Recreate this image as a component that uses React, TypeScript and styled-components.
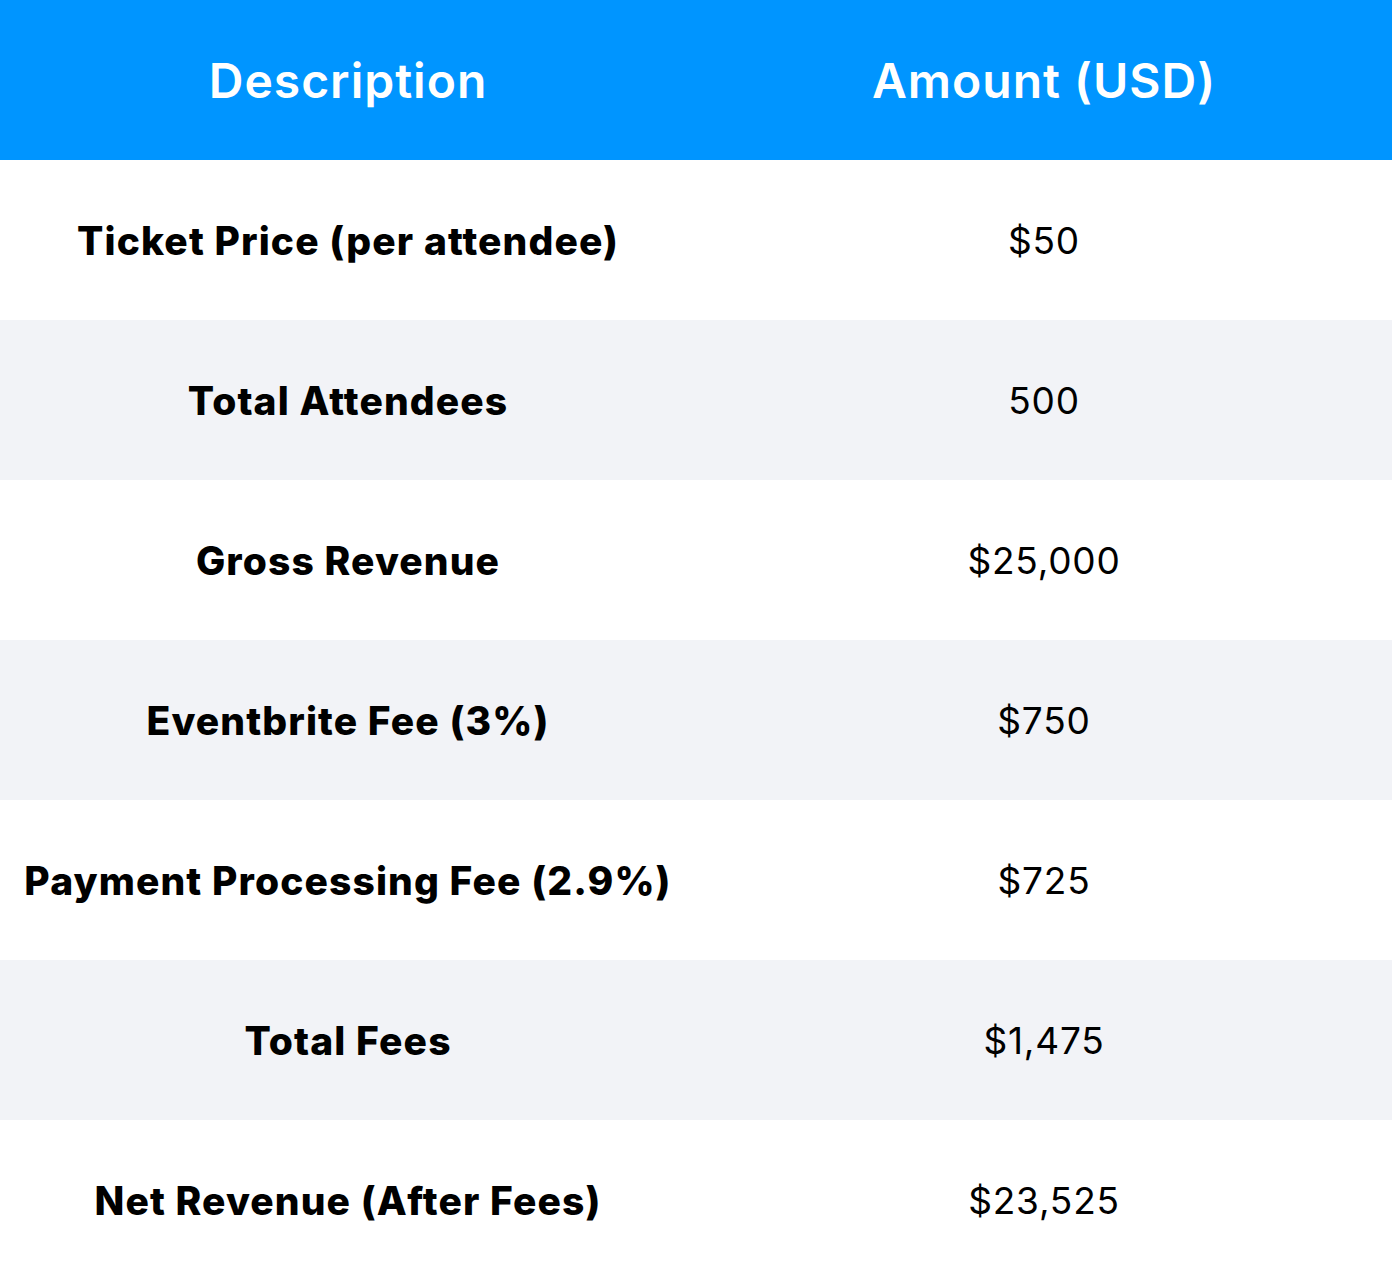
import React from "react";
import styled, { createGlobalStyle } from "styled-components";

const GlobalStyle = createGlobalStyle`
  html, body {
    margin: 0;
    padding: 0;
    background: #ffffff;
  }
`;

const rows = [
  { label: "Ticket Price (per attendee)", amount: "$50" },
  { label: "Total Attendees", amount: "500" },
  { label: "Gross Revenue", amount: "$25,000" },
  { label: "Eventbrite Fee (3%)", amount: "$750" },
  { label: "Payment Processing Fee (2.9%)", amount: "$725" },
  { label: "Total Fees", amount: "$1,475" },
  { label: "Net Revenue (After Fees)", amount: "$23,525" },
];

export default function App() {
  return (
    <>
      <GlobalStyle />
      <Table>
        <HeaderRow>
          <HeaderCell>Description</HeaderCell>
          <HeaderCell>Amount (USD)</HeaderCell>
        </HeaderRow>
        {rows.map((row, i) => (
          <Row key={row.label} $striped={i % 2 === 1}>
            <LabelCell>{row.label}</LabelCell>
            <AmountCell>{row.amount}</AmountCell>
          </Row>
        ))}
      </Table>
    </>
  );
}

const Table = styled.div`
  width: 1392px;
  display: flex;
  flex-direction: column;
  font-family: Inter, "Noto Sans", sans-serif;
  color: #000000;
`;

const HeaderRow = styled.div`
  display: grid;
  grid-template-columns: 1fr 1fr;
  height: 160px;
  background: #0095ff;
`;

const HeaderCell = styled.div`
  display: flex;
  align-items: center;
  justify-content: center;
  color: #ffffff;
  font-size: 48px;
  font-weight: 600;
  letter-spacing: 1px;
`;

const Row = styled.div<{ $striped: boolean }>`
  display: grid;
  grid-template-columns: 1fr 1fr;
  height: 160px;
  background: ${(props) => (props.$striped ? "#f2f3f7" : "#ffffff")};
`;

const LabelCell = styled.div`
  display: flex;
  align-items: center;
  justify-content: center;
  font-size: 39px;
  font-weight: 800;
  letter-spacing: 1.1px;
  white-space: nowrap;
`;

const AmountCell = styled.div`
  display: flex;
  align-items: center;
  justify-content: center;
  font-size: 37px;
  font-weight: 400;
  letter-spacing: 0.8px;
`;
